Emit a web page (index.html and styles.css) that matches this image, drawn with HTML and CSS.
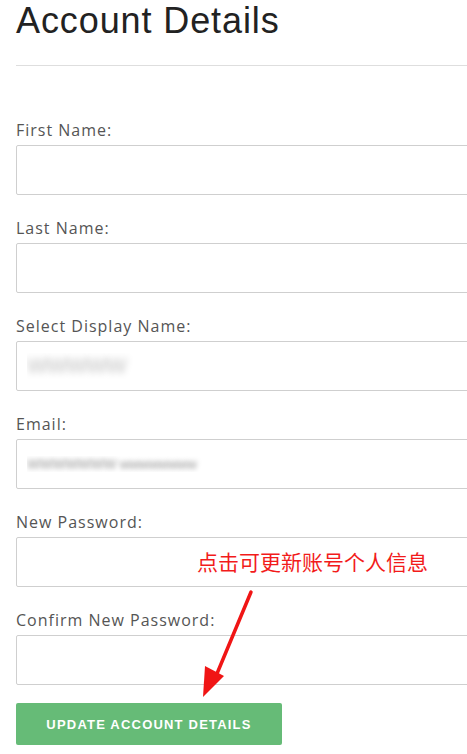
FILE: index.html
```html
<!DOCTYPE html>
<html lang="en">
<head>
    <meta charset="UTF-8">
    <meta name="viewport" content="width=device-width, initial-scale=1.0">
    <title>Account Details</title>
    <link rel="stylesheet" href="styles.css">
</head>
<body>
    <div class="account">
        <h2>Account Details</h2>
        <hr class="divider">
        <form class="account-form">
            <div class="form-group">
                <label for="first-name">First Name:</label>
                <input type="text" id="first-name">
            </div>
            <div class="form-group">
                <label for="last-name">Last Name:</label>
                <input type="text" id="last-name">
            </div>
            <div class="form-group">
                <label for="display-name">Select Display Name:</label>
                <input type="text" id="display-name" class="blurred" value="WWWWW">
            </div>
            <div class="form-group">
                <label for="email">Email:</label>
                <input type="email" id="email" class="blurred blurred-mail" value="WWWWWWW wwwwwwww">
            </div>
            <div class="form-group">
                <label for="new-pass">New Password:</label>
                <input type="password" id="new-pass">
            </div>
            <div class="form-group">
                <label for="confirm-pass">Confirm New Password:</label>
                <input type="password" id="confirm-pass">
            </div>
            <button type="button" class="button">Update Account Details</button>
        </form>
        <div class="note">点击可更新账号个人信息</div>
        <svg class="arrow" width="80" height="120" viewBox="0 0 80 120">
            <path d="M61 8 L26 92" stroke="#f01515" stroke-width="3.5" stroke-linecap="round" fill="none"/>
            <path d="M13 113 L15 82 L34 92 Z" fill="#f01515"/>
        </svg>
    </div>
</body>
</html>
```

FILE: styles.css
```css
html, body {
    margin: 0;
    padding: 0;
    background: #fff;
    overflow: hidden;
}
body {
    font-family: "Open Sans", "Liberation Sans", sans-serif;
    color: #555;
}
.account {
    position: relative;
    width: 520px;
    padding: 0 0 0 16px;
}
h2 {
    margin: 0;
    padding-top: 1px;
    font-family: "Liberation Sans", Arial, sans-serif;
    font-size: 36px;
    font-weight: normal;
    letter-spacing: 0.9px;
    line-height: 40px;
    color: #222;
}
.divider {
    border: none;
    border-top: 1px solid #dedede;
    margin: 24px 0 0;
}
.account-form {
    padding-top: 54px;
}
.form-group {
    margin-bottom: 23px;
}
label {
    display: block;
    font-size: 16px;
    line-height: 20px;
    letter-spacing: 1px;
    color: #555;
    margin-bottom: 5px;
}
input {
    display: block;
    width: 100%;
    height: 50px;
    box-sizing: border-box;
    border: 1px solid #cfcfcf;
    border-radius: 2px;
    padding: 0 10px;
    font-size: 15px;
    background: #fff;
    outline: none;
}
.blurred {
    color: transparent;
    text-shadow: 0 0 7px rgba(0, 0, 0, 0.25);
    font-family: "Liberation Sans", sans-serif;
    font-size: 22px;
    letter-spacing: -1px;
}
.blurred-mail {
    font-size: 14px;
    letter-spacing: -0.5px;
    text-shadow: 0 0 5px rgba(0, 0, 0, 0.4);
}
.button {
    display: block;
    margin-top: -5px;
    width: 266px;
    height: 42px;
    padding-top: 2px;
    background: #66bb77;
    color: #fff;
    border: none;
    border-radius: 2px;
    font-family: "Liberation Sans", Arial, sans-serif;
    font-size: 13px;
    font-weight: bold;
    letter-spacing: 1.2px;
    text-transform: uppercase;
    cursor: pointer;
}
.note {
    position: absolute;
    left: 197px;
    top: 548px;
    font-family: "Noto Sans CJK SC", sans-serif;
    font-size: 21px;
    line-height: 26px;
    color: #f21b1b;
}
.arrow {
    position: absolute;
    left: 190px;
    top: 584px;
}
```
